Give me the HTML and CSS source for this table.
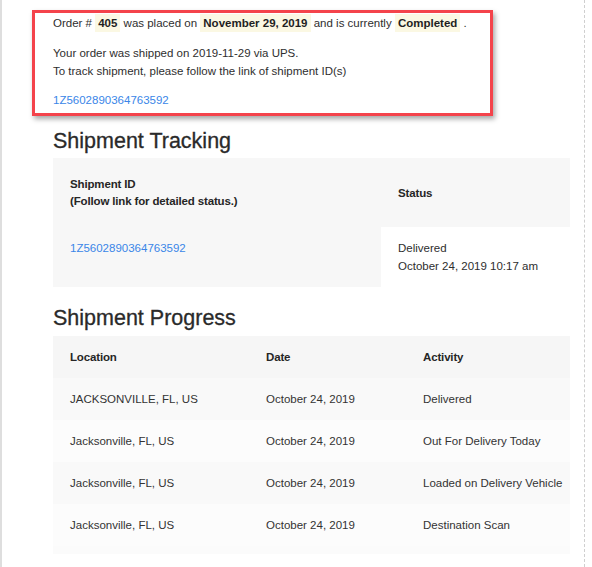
FILE: index.html
```html
<!DOCTYPE html>
<html>
<head>
<meta charset="utf-8">
<link rel="stylesheet" href="styles.css">
</head>
<body>
<div class="page">
  <div class="content">
    <div class="intro">
      <p class="line">Order # <mark>405</mark> was placed on <mark>November 29, 2019</mark> and is currently <mark>Completed</mark> .</p>
      <p class="line">Your order was shipped on 2019-11-29 via UPS.<br>To track shipment, please follow the link of shipment ID(s)</p>
      <p class="line"><a href="#">1Z5602890364763592</a></p>
    </div>

    <h2 class="title title-first">Shipment Tracking</h2>
    <table class="tracking">
      <colgroup><col class="c-id"><col class="c-status"></colgroup>
      <thead>
        <tr class="head-row">
          <th>Shipment ID<br>(Follow link for detailed status.)</th>
          <th>Status</th>
        </tr>
      </thead>
      <tbody>
        <tr class="body-row">
          <th class="row-head"><a href="#">1Z5602890364763592</a></th>
          <td>Delivered<br>October 24, 2019 10:17 am</td>
        </tr>
      </tbody>
    </table>

    <h2 class="title title-second">Shipment Progress</h2>
    <div class="progress-wrap">
      <table class="progress">
        <colgroup><col class="c-loc"><col class="c-date"><col class="c-act"></colgroup>
        <thead>
          <tr><th>Location</th><th>Date</th><th>Activity</th></tr>
        </thead>
        <tbody>
          <tr><td>JACKSONVILLE, FL, US</td><td>October 24, 2019</td><td>Delivered</td></tr>
          <tr><td>Jacksonville, FL, US</td><td>October 24, 2019</td><td>Out For Delivery Today</td></tr>
          <tr><td>Jacksonville, FL, US</td><td>October 24, 2019</td><td>Loaded on Delivery Vehicle</td></tr>
          <tr><td>Jacksonville, FL, US</td><td>October 24, 2019</td><td>Destination Scan</td></tr>
        </tbody>
      </table>
    </div>
  </div>
</div>
</body>
</html>
```

FILE: styles.css
```css
html, body {
  margin: 0;
  padding: 0;
  background: #ffffff;
}

body {
  font-family: "Liberation Sans", Arial, sans-serif;
  font-size: 11.5px;
  line-height: 18px;
  color: #2e2e2e;
}

.page {
  width: 585px;
  min-height: 567px;
  border-left: 2px solid #dedede;
  border-right: 1px dashed #cfcfcf;
  box-sizing: border-box;
}

.content {
  padding: 10px 0 0 51px;
  width: 517px;
}

.intro {
  margin-left: -21px;
  width: 461px;
  box-sizing: border-box;
  border: 3px solid #f4434b;
  padding: 1px 6px 4px 18px;
  box-shadow: 2px 3px 5px rgba(0, 0, 0, 0.35);
  background: #ffffff;
}

.line {
  margin: 0;
  white-space: nowrap;
}

.line + .line {
  margin-top: 12px;
}

.line:last-child {
  margin-top: 11px;
}

mark {
  background: #fbf8e3;
  color: #1f1f1f;
  font-weight: 700;
  padding: 3px 3px;
}

a {
  color: #3a86e8;
  text-decoration: none;
}

.title {
  margin: 0;
  font-size: 21.5px;
  line-height: 26px;
  font-weight: 400;
  color: #2a2a2a;
  -webkit-text-stroke: 0.3px #2a2a2a;
}

.title-first {
  margin-top: 12px;
  margin-bottom: 4px;
}

.title-second {
  margin-top: 18px;
  margin-bottom: 5px;
}

table {
  border-collapse: collapse;
  width: 517px;
  table-layout: fixed;
}

th, td {
  text-align: left;
  padding: 0 4px 0 17px;
  font-size: 11.5px;
  line-height: 18px;
  white-space: nowrap;
}

th {
  font-weight: 700;
  color: #262626;
  letter-spacing: -0.15px;
}

.c-id { width: 328px; }
.c-status { width: 189px; }

.tracking .head-row {
  height: 69px;
}

.tracking .head-row th {
  background: #f7f7f7;
  vertical-align: middle;
}

.tracking .head-row th:first-child {
  line-height: 17px;
}

.tracking .body-row {
  height: 60px;
}

.tracking .row-head {
  background: #f7f7f7;
  font-weight: 400;
  letter-spacing: 0;
  vertical-align: top;
  padding-top: 12px;
}

.tracking .body-row td {
  background: #ffffff;
  vertical-align: middle;
}

.progress-wrap {
  width: 517px;
  padding-bottom: 8px;
  background: #fbfbfb;
}

.c-loc { width: 196px; }
.c-date { width: 157px; }
.c-act { width: 164px; }

.progress tr {
  height: 42px;
}

.progress th,
.progress td {
  vertical-align: middle;
}

.progress thead th {
  background: #f6f6f6;
}

.progress tbody tr:nth-child(odd) td {
  background: #f9f9f9;
}

.progress tbody tr:nth-child(even) td {
  background: #fcfcfc;
}

.progress td {
  color: #333333;
}
```
